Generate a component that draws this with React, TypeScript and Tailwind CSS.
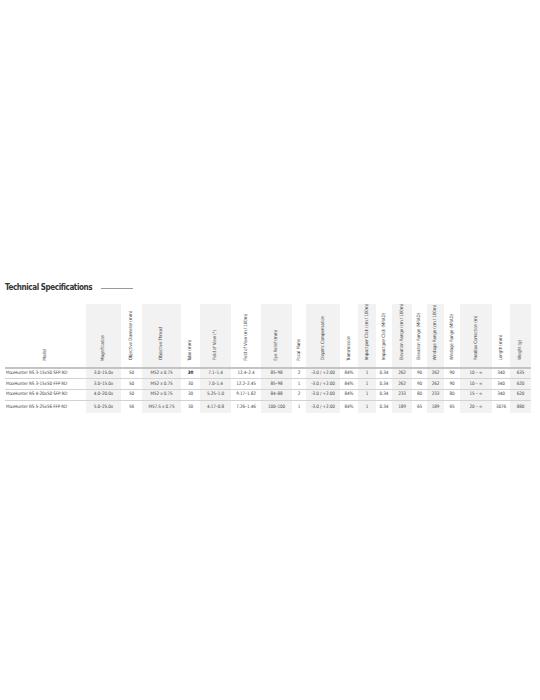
type Col = { label: string; w: string; shaded: boolean };

const cols: Col[] = [
  { label: 'Model', w: 'w-[81px]', shaded: false },
  { label: 'Magnification', w: 'w-[35px]', shaded: true },
  { label: 'Objective Diameter (mm)', w: 'w-[21px]', shaded: false },
  { label: 'Objective Thread', w: 'w-[39px]', shaded: true },
  { label: 'Tube (mm)', w: 'w-[19px]', shaded: false },
  { label: 'Field of View (°)', w: 'w-[31px]', shaded: true },
  { label: 'Field of View (m / 100m)', w: 'w-[30px]', shaded: false },
  { label: 'Eye Relief (mm)', w: 'w-[31px]', shaded: true },
  { label: 'Focal Plane', w: 'w-[14px]', shaded: false },
  { label: 'Dioptric Compensation', w: 'w-[34px]', shaded: true },
  { label: 'Transmission', w: 'w-[18px]', shaded: false },
  { label: 'Impact per Click (cm / 100m)', w: 'w-[18px]', shaded: true },
  { label: 'Impact per Click (MRAD)', w: 'w-[16px]', shaded: false },
  { label: 'Elevation Range (cm / 100m)', w: 'w-[20px]', shaded: true },
  { label: 'Elevation Range (MRAD)', w: 'w-[15px]', shaded: false },
  { label: 'Windage Range (cm / 100m)', w: 'w-[17px]', shaded: true },
  { label: 'Windage Range (MRAD)', w: 'w-[16px]', shaded: false },
  { label: 'Parallax Correction (m)', w: 'w-[32px]', shaded: true },
  { label: 'Length (mm)', w: 'w-[18px]', shaded: false },
  { label: 'Weight (g)', w: 'w-[21px]', shaded: true },
];

const rows: string[][] = [
  ['MaxHunter RS 3-15x50 SFP RD', '3.0–15.0x', '50', 'M52 x 0.75', '30', '7.1–1.4', '12.4–2.4', '85–98', '2', '-3.0 / +2.00', '84%', '1', '0.34', '262', '90', '262', '90', '10 – ∞', '340', '635'],
  ['MaxHunter RS 3-15x50 FFP RD', '3.0–15.0x', '50', 'M52 x 0.75', '30', '7.0–1.4', '12.2–2.45', '85–98', '1', '-3.0 / +2.00', '84%', '1', '0.34', '262', '90', '262', '90', '10 – ∞', '340', '620'],
  ['MaxHunter RS 4-20x50 SFP RD', '4.0–20.0x', '50', 'M52 x 0.75', '30', '5.25–1.0', '9.17–1.82', '84–88', '2', '-3.0 / +2.00', '84%', '1', '0.34', '233', '80', '233', '80', '15 – ∞', '340', '620'],
  ['MaxHunter RS 5-25x56 FFP RD', '5.0–25.0x', '56', 'M57.5 x 0.75', '30', '4.17–0.8', '7.26–1.46', '100–100', '1', '-3.0 / +2.00', '84%', '1', '0.34', '189', '65', '189', '65', '20 – ∞', '3076', '880'],
];

export default function App() {
  return (
    <div className="min-h-[700px] bg-white text-[#454545] font-['Liberation_Sans_Narrow','DejaVu_Sans_Condensed',sans-serif]">
      <div className="pt-[283px] px-[5px]">
        {/* Title */}
        <div className="flex items-center gap-[9px]">
          <h2 className="text-[8px] leading-[10px] font-bold tracking-[-0.4px] text-[#333]">Technical Specifications</h2>
          <div className="w-[32px] h-px bg-[#9a9a9a]"></div>
        </div>

        {/* Spec table */}
        <table className="mt-[11px] table-fixed border-collapse text-[4.6px] leading-none">
          <colgroup>
            {cols.map((c) => (
              <col key={c.label} className={c.w} />
            ))}
          </colgroup>
          <thead>
            <tr>
              {cols.map((c) => (
                <th
                  key={c.label}
                  className={`h-[64px] p-0 pb-[5px] align-bottom text-center font-normal border-b-2 border-[#c4c4c4] ${c.shaded ? 'bg-[#f2f2f2]' : ''}`}
                >
                  <span className="inline-block whitespace-nowrap tracking-[-0.15px] rotate-180 [writing-mode:vertical-rl]">{c.label}</span>
                </th>
              ))}
            </tr>
          </thead>
          <tbody>
            {rows.map((r, ri) => (
              <tr key={ri}>
                {r.map((v, ci) => (
                  <td
                    key={ci}
                    className={`p-0 whitespace-nowrap tracking-[-0.1px] ${ri === rows.length - 1 ? 'h-[13px]' : 'h-[10.7px] border-b border-[#d2d2d2]'} ${ci === 0 ? 'text-left pl-[1px]' : 'text-center'} ${cols[ci].shaded ? 'bg-[#f2f2f2]' : ''} ${ri === 0 && ci === 4 ? 'font-bold text-[#222]' : ''}`}
                  >
                    {v}
                  </td>
                ))}
              </tr>
            ))}
          </tbody>
        </table>
      </div>
    </div>
  );
}
